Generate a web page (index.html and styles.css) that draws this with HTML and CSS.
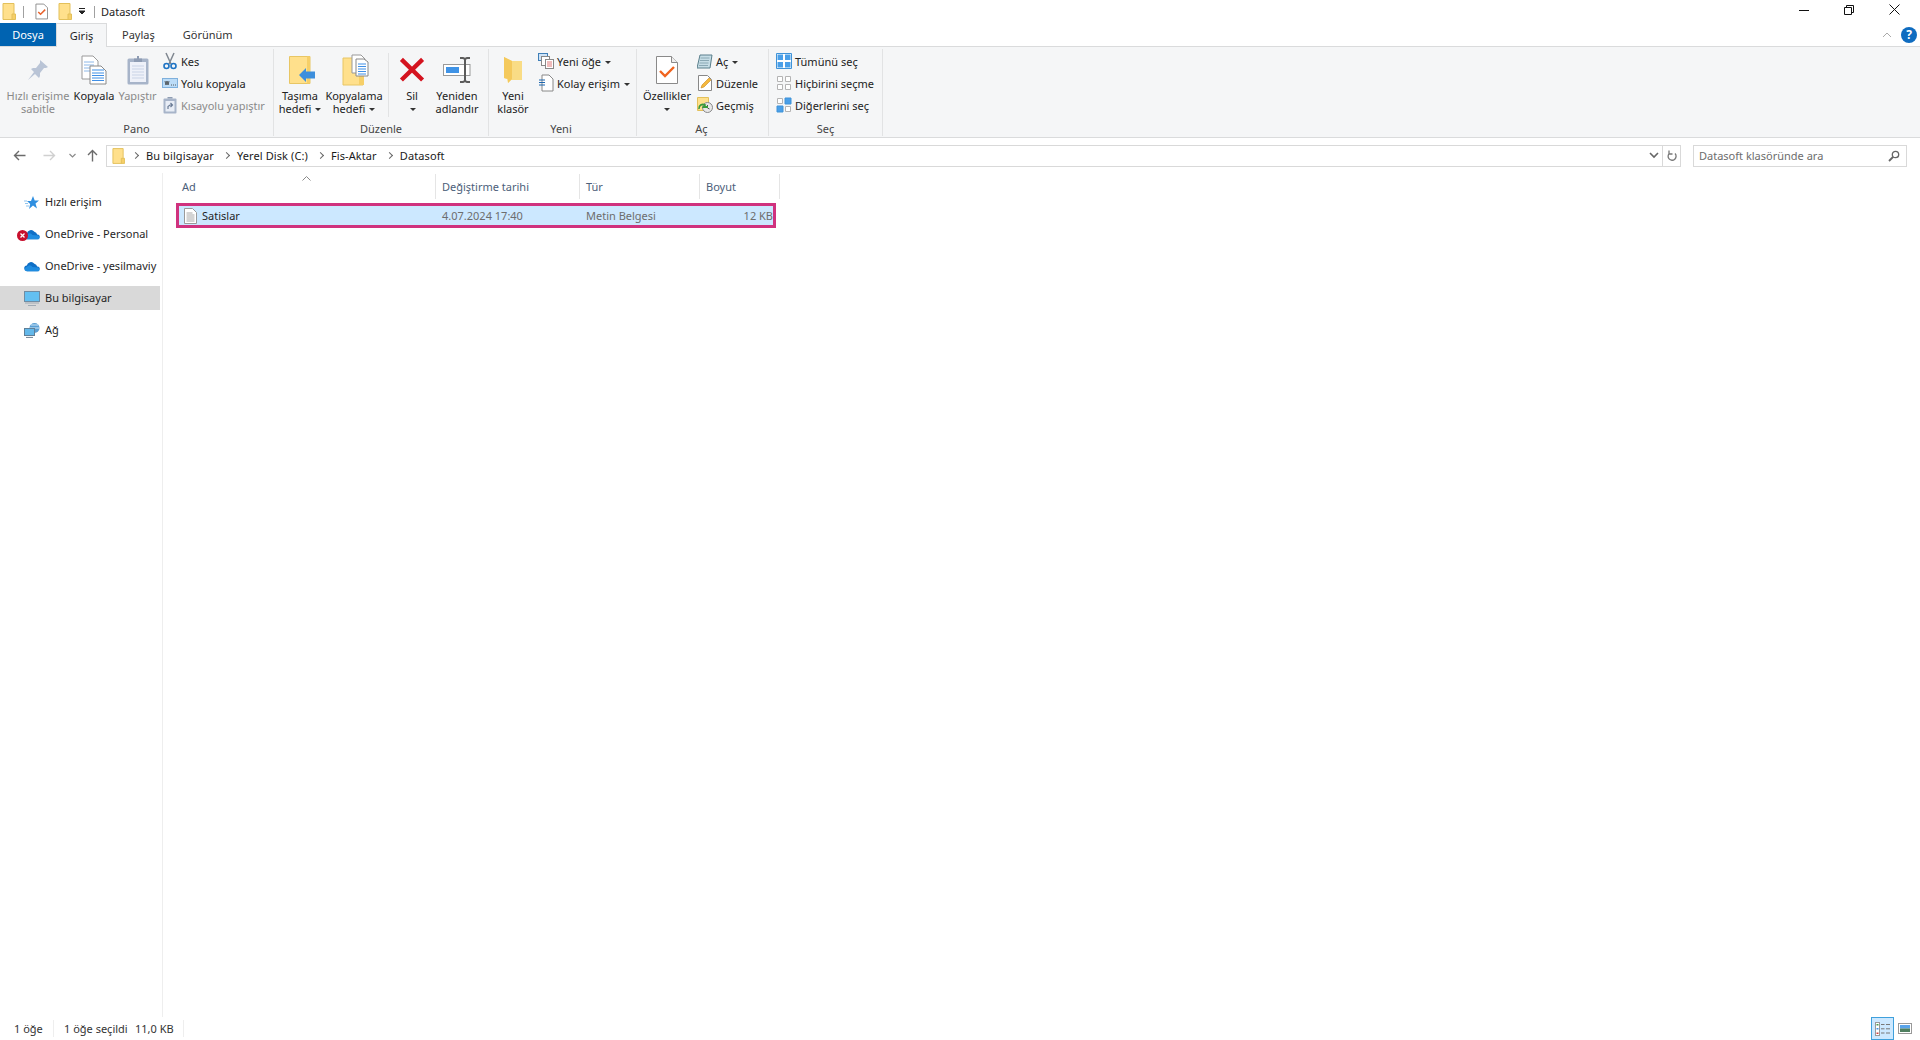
FILE: index.html
```html
<!DOCTYPE html>
<html lang="tr">
<head>
<meta charset="utf-8">
<title>Datasoft</title>
<link rel="stylesheet" href="styles.css">
</head>
<body>
<svg class="defs" width="0" height="0" aria-hidden="true">
  <symbol id="folder" viewBox="0 0 14 17"><path d="M1 .5h11v13l-1.500 .5v2.500H1z" fill="#ffe08c" stroke="#e3c05a"/><path d="M10 11h3.500v5.500H10z" fill="#f6cf68" stroke="#e3c05a"/></symbol>
  <symbol id="props-s" viewBox="0 0 14 17"><path d="M1 .5h8.500l4 4v12H1z" fill="#fff" stroke="#8a8a8a"/><path d="M3.500 9l2.500 2.500 5-5" fill="none" stroke="#e8622c" stroke-width="1.600"/></symbol>
  <symbol id="pin" viewBox="0 0 24 24"><path d="M14 2l8 7-2 1-2 0-4 5 0 3-1 2-4-4-7 6 6-8-3-3 2-1h3l4-5v-2z" fill="#b9c4d6"/></symbol>
  <symbol id="copy" viewBox="0 0 26 30"><path d="M1 1h11l5 5v18H1z" fill="#fff" stroke="#9a9a9a"/><path d="M3 7h10M3 10h10M3 13h6M3 16h6" stroke="#8db8e8"/><path d="M9 11h11l5 5v13H9z" fill="#fff" stroke="#8a8a8a"/><path d="M11 15h12M11 18h12M11 20.500h12M11 23h12M11 25.500h12" stroke="#3f8fe6" stroke-width="1.200"/></symbol>
  <symbol id="paste" viewBox="0 0 22 30"><rect x=".5" y="3.500" width="21" height="26" rx="1.500" fill="#a7b4c9"/><rect x="3" y="7" width="16" height="20" fill="#eef1f9"/><path d="M5 11h12M5 14h12M5 17h12M5 20h12M5 23h12" stroke="#c9d3e6"/><path d="M7 7V3.500h3V1h2v2.500h3V7z" fill="#8e9cb3"/></symbol>
  <symbol id="cut" viewBox="0 0 14 18"><path d="M3 1l5 11M11 1L6 12" stroke="#7f8790" stroke-width="1.500" fill="none"/><circle cx="3.500" cy="14" r="2.500" fill="none" stroke="#1f74c4" stroke-width="1.600"/><circle cx="10.500" cy="14" r="2.500" fill="none" stroke="#1f74c4" stroke-width="1.600"/></symbol>
  <symbol id="path" viewBox="0 0 16 10"><rect x=".5" y=".5" width="15" height="9" fill="#bcdcf7" stroke="#7fb0dc"/><path d="M3 3l1 4 1-4 1 4 1-4M9 7h1M11 7h1M13 7h1" stroke="#3a3a3a" fill="none" stroke-width=".8"/></symbol>
  <symbol id="shortcut" viewBox="0 0 14 18"><rect x=".5" y="2.500" width="13" height="15" rx="1" fill="#a7b4c9"/><rect x="2.500" y="5" width="9" height="10.500" fill="#e8edf6"/><path d="M4.500 2.500V1h5v1.500" fill="#8e9cb3"/><path d="M5 13v-2.500l2-1.500H9M7.500 7l2 2-2 2" stroke="#6b7c96" stroke-width="1.200" fill="none"/></symbol>
  <symbol id="move" viewBox="0 0 26 28"><path d="M.5 .5h20.500v27H.5z" fill="#ffe08c" stroke="#e8c664"/><path d="M18 .5h3v27h-3z" fill="#f6cf68"/><path d="M10 19l7-7v3.500h9v7h-9V26z" fill="#3d8fdc"/></symbol>
  <symbol id="copyto" viewBox="0 0 27 32"><path d="M1 4h20v27H1z" fill="#ffe08c" stroke="#e8c664"/><path d="M17 4h5v27h-5z" fill="#f6cf68"/><path d="M10 1h9l4 4v14H10z" fill="#fff" stroke="#999"/><path d="M14 5h8l4 3v14H14z" fill="#fff" stroke="#888"/><path d="M16 10h8M16 12.500h8M16 15h8M16 17.500h8M16 20h8" stroke="#3f8fe6"/></symbol>
  <symbol id="del" viewBox="0 0 26 26"><path d="M2 2.500L24 24M24 2.500L2 24" stroke="#d4131f" stroke-width="4.500" fill="none"/></symbol>
  <symbol id="rename" viewBox="0 0 28 26"><rect x=".5" y="7.500" width="26.500" height="11" fill="#fff" stroke="#9a9a9a"/><rect x="3" y="10" width="13" height="6" fill="#3f93e6"/><path d="M17 1h3l2 1 2-1h3M22 2v22M17 25h3l2-1 2 1h3" stroke="#5c5c5c" stroke-width="2" fill="none"/></symbol>
  <symbol id="newfolder" viewBox="0 0 20 28"><path d="M1 1l8 4h10v19H8l-3 3-1-4-3-1z" fill="#f9dc85"/><path d="M1 1l8 4v18l-4 4V23l-4-1z" fill="#f4c95c"/></symbol>
  <symbol id="newitem" viewBox="0 0 16 16"><rect x=".5" y=".5" width="9" height="7" fill="#cfe3f6" stroke="#3f7fb8"/><rect x="3.500" y="3.500" width="8" height="9" fill="#fff" stroke="#888"/><rect x="7.500" y="6.500" width="8" height="9" fill="#fff" stroke="#888"/><path d="M9 9h5M9 11h5M9 13h5" stroke="#e07878"/></symbol>
  <symbol id="easy" viewBox="0 0 16 18"><path d="M4 1h7l4 4v12H4z" fill="#fff" stroke="#888"/><path d="M1 6h6M1 8.500h6M1 11h6" stroke="#1f68b0" stroke-width="1.100"/></symbol>
  <symbol id="props" viewBox="0 0 22 28"><path d="M.5 .5h15l6 6v21H.5z" fill="#fff" stroke="#8a8a8a"/><path d="M15.500 .5v6h6" fill="#eee" stroke="#8a8a8a"/><path d="M4 15l5 5 9-9" fill="none" stroke="#f0641e" stroke-width="2.400"/></symbol>
  <symbol id="open" viewBox="0 0 16 16"><path d="M3 2h12l-2 13H0z" fill="#c6dde6" stroke="#5a7f8c"/><path d="M3.500 5h9M3 7.500h9M2.500 10h9M2 12.500h9" stroke="#8aa8b4"/></symbol>
  <symbol id="edit" viewBox="0 0 14 16"><path d="M.5 .5h9l4 4v11H.5z" fill="#fff" stroke="#888"/><path d="M3 13l1-3 7-7 2 2-7 7z" fill="#f5b83c" stroke="#c98a1e" stroke-width=".6"/></symbol>
  <symbol id="history" viewBox="0 0 16 16"><path d="M.5 .5h11v13H.5z" fill="#ffe08c" stroke="#e3c05a"/><circle cx="10.500" cy="10.500" r="5" fill="#e8e8e8" stroke="#888"/><path d="M10.500 8v3l2 1" stroke="#555" fill="none"/><path d="M2 12a4 4 0 0 1 6-4l-1.500 2H11" stroke="#3a9a3a" stroke-width="1.800" fill="none"/></symbol>
  <symbol id="selall" viewBox="0 0 16 16"><path d="M.5 .5h15v15H.5z" fill="#fff" stroke="#3f93d8"/><path d="M1.500 1.500h5.500v5.500H1.500zM9 1.500h5.500v5.500H9zM1.500 9h5.500v5.500H1.500zM9 9h5.500v5.500H9z" fill="#4a9fe8"/></symbol>
  <symbol id="selnone" viewBox="0 0 16 16"><path d="M1.500 1.500h5v5h-5zM9.500 1.500h5v5h-5zM1.500 9.500h5v5h-5zM9.500 9.500h5v5h-5z" fill="#fff" stroke="#b4b4b4"/></symbol>
  <symbol id="selinv" viewBox="0 0 16 16"><path d="M1.500 1.500h5v5h-5zM9.500 9.500h5v5h-5z" fill="#fff" stroke="#b4b4b4"/><path d="M9 1h6v6H9zM1 9h6v6H1z" fill="#4a9fe8" stroke="#3f93d8"/></symbol>
  <symbol id="cloud" viewBox="0 0 17 11"><path d="M3.500 10.500a3 3 0 0 1-.5-6 4.500 4.500 0 0 1 8-2 4 4 0 0 1 3 3 2.500 2.500 0 0 1 .5 5z" fill="#0f6fc6"/><path d="M1 9.500a2.500 2.500 0 0 1 2-3.500 3.500 3.500 0 0 1 6 0l6 .5a2.500 2.500 0 0 1 1.500 2l-.5 2H3z" fill="#1f8ce0"/></symbol>
</svg>

<header class="titlebar">
  <svg class="qa-folder" width="14" height="17"><use href="#folder"/></svg>
  <span class="qa-sep"></span>
  <svg class="qa-props" width="13" height="17"><use href="#props-s"/></svg>
  <svg class="qa-folder2" width="14" height="17"><use href="#folder"/></svg>
  <svg class="qa-drop" width="8" height="7" viewBox="0 0 8 7"><path d="M1 .5h6M1 3l3 3 3-3z" stroke="#222" fill="#222"/></svg>
  <span class="qa-sep qa-sep2"></span>
  <span class="title">Datasoft</span>
  <div class="winctl">
    <svg width="10" height="10" viewBox="0 0 10 10"><path d="M0 5.500h10" stroke="#111"/></svg>
    <svg width="10" height="10" viewBox="0 0 10 10"><path d="M.5 2.500h7v7h-7zM2.500 2.500V.5h7v7h-2" fill="none" stroke="#111"/></svg>
    <svg width="11" height="11" viewBox="0 0 11 11"><path d="M.5 .5l10 10M10.500 .5l-10 10" stroke="#111"/></svg>
  </div>
</header>

<nav class="tabs">
  <span class="tab tab-file">Dosya</span>
  <span class="tab tab-active">Giriş</span>
  <span class="tab tab-share">Paylaş</span>
  <span class="tab tab-view">Görünüm</span>
  <svg class="collapse" width="10" height="6" viewBox="0 0 10 6"><path d="M1 5l4-4 4 4" fill="none" stroke="#aaa"/></svg>
  <span class="help">?</span>
</nav>

<section class="ribbon">
  <div class="group g-pano">
    <div class="items">
      <div class="big w-pin dim"><span class="ico"><svg width="24" height="24"><use href="#pin"/></svg></span><span class="lbl">Hızlı erişime<br>sabitle</span></div>
      <div class="big w-copy"><span class="ico"><svg width="26" height="30"><use href="#copy"/></svg></span><span class="lbl">Kopyala</span></div>
      <div class="big w-paste dim"><span class="ico"><svg width="22" height="30"><use href="#paste"/></svg></span><span class="lbl">Yapıştır</span></div>
      <div class="col col-pano">
        <div class="small"><svg width="14" height="18"><use href="#cut"/></svg><span>Kes</span></div>
        <div class="small small-path"><svg width="16" height="10"><use href="#path"/></svg><span>Yolu kopyala</span></div>
        <div class="small dim"><svg width="14" height="18"><use href="#shortcut"/></svg><span>Kısayolu yapıştır</span></div>
      </div>
    </div>
    <div class="glabel">Pano</div>
  </div>
  <div class="group g-duz">
    <div class="items">
      <div class="big w-move"><span class="ico"><svg class="off-move" width="26" height="28"><use href="#move"/></svg></span><span class="lbl">Taşıma<br>hedefi <i class="caret"></i></span></div>
      <div class="big w-copyto"><span class="ico"><svg class="off-copyto" width="27" height="32"><use href="#copyto"/></svg></span><span class="lbl">Kopyalama<br>hedefi <i class="caret"></i></span></div>
      <span class="vsep"></span>
      <div class="big w-del"><span class="ico"><svg width="26" height="25"><use href="#del"/></svg></span><span class="lbl">Sil<br><i class="caret"></i></span></div>
      <div class="big w-ren"><span class="ico"><svg width="28" height="26"><use href="#rename"/></svg></span><span class="lbl">Yeniden<br>adlandır</span></div>
    </div>
    <div class="glabel">Düzenle</div>
  </div>
  <div class="group g-yeni">
    <div class="items">
      <div class="big w-new"><span class="ico"><svg width="20" height="28"><use href="#newfolder"/></svg></span><span class="lbl">Yeni<br>klasör</span></div>
      <div class="col">
        <div class="small"><svg width="16" height="16"><use href="#newitem"/></svg><span>Yeni öğe <i class="caret"></i></span></div>
        <div class="small"><svg width="16" height="18"><use href="#easy"/></svg><span>Kolay erişim <i class="caret"></i></span></div>
      </div>
    </div>
    <div class="glabel">Yeni</div>
  </div>
  <div class="group g-ac">
    <div class="items">
      <div class="big w-props"><span class="ico"><svg width="22" height="28"><use href="#props"/></svg></span><span class="lbl">Özellikler<br><i class="caret"></i></span></div>
      <div class="col">
        <div class="small"><svg width="16" height="16"><use href="#open"/></svg><span>Aç <i class="caret"></i></span></div>
        <div class="small"><svg width="16" height="16"><use href="#edit"/></svg><span>Düzenle</span></div>
        <div class="small"><svg width="16" height="16"><use href="#history"/></svg><span>Geçmiş</span></div>
      </div>
    </div>
    <div class="glabel">Aç</div>
  </div>
  <div class="group g-sec">
    <div class="items">
      <div class="col">
        <div class="small"><svg width="16" height="16"><use href="#selall"/></svg><span>Tümünü seç</span></div>
        <div class="small"><svg width="16" height="16"><use href="#selnone"/></svg><span>Hiçbirini seçme</span></div>
        <div class="small"><svg width="16" height="16"><use href="#selinv"/></svg><span>Diğerlerini seç</span></div>
      </div>
    </div>
    <div class="glabel">Seç</div>
  </div>
</section>

<section class="addr">
  <div class="navbtns">
    <svg width="13" height="11" viewBox="0 0 13 11"><path d="M12.500 5.500H1.500M6 1L1.500 5.500 6 10" fill="none" stroke="#6b6b6b" stroke-width="1.400"/></svg>
    <svg width="13" height="11" viewBox="0 0 13 11"><path d="M.5 5.500h11M7 1l4.500 4.500L7 10" fill="none" stroke="#d0d0d0" stroke-width="1.400"/></svg>
    <svg width="7" height="5" viewBox="0 0 7 5"><path d="M.5 1l3 3 3-3" fill="none" stroke="#8a8a8a" stroke-width="1.200"/></svg>
    <svg width="11" height="13" viewBox="0 0 11 13"><path d="M5.500 12.500V1.500M1 6l4.500-4.500L10 6" fill="none" stroke="#6b6b6b" stroke-width="1.400"/></svg>
  </div>
  <div class="pathbox">
    <svg class="pfolder" width="13" height="16"><use href="#folder"/></svg>
    <span class="chev"></span><span class="crumb">Bu bilgisayar</span>
    <span class="chev"></span><span class="crumb">Yerel Disk (C:)</span>
    <span class="chev"></span><span class="crumb">Fis-Aktar</span>
    <span class="chev"></span><span class="crumb">Datasoft</span>
    <svg class="pdrop" width="10" height="7" viewBox="0 0 10 7"><path d="M1 1l4 4 4-4" fill="none" stroke="#666" stroke-width="1.600"/></svg>
    <span class="psep"></span>
    <svg class="prefresh" width="10" height="12" viewBox="0 0 10 12"><path d="M2.500 3.200a4 4 0 1 0 5.500 .3M2 .5v3.500h3.500" fill="none" stroke="#777" stroke-width="1.300"/></svg>
  </div>
  <div class="search">
    <span>Datasoft klasöründe ara</span>
    <svg width="12" height="12" viewBox="0 0 12 12"><circle cx="7.500" cy="4.500" r="3.200" fill="none" stroke="#666" stroke-width="1.300"/><path d="M5 7l-4 4" stroke="#666" stroke-width="1.800"/></svg>
  </div>
</section>

<main class="main">
  <aside class="tree">
    <div class="node"><svg class="nico" width="16" height="15" viewBox="0 0 16 15"><path d="M9 1l1.700 4.500H15l-3.500 3 1.500 5L9 10.500 5 14l1.200-5L3 6h4z" fill="#2f8fe0"/><path d="M0 6h3M1 8.500h3M2 11h3" stroke="#8fc4ee"/></svg><span>Hızlı erişim</span></div>
    <div class="node"><svg class="nico" width="16" height="11"><use href="#cloud"/></svg><span class="badge"><svg width="11" height="11" viewBox="0 0 11 11"><circle cx="5.500" cy="5.500" r="5.500" fill="#c8102e"/><path d="M3.500 3.500l4 4M7.500 3.500l-4 4" stroke="#fff" stroke-width="1.300"/></svg></span><span>OneDrive - Personal</span></div>
    <div class="node"><svg class="nico" width="16" height="11"><use href="#cloud"/></svg><span>OneDrive - yesilmaviy</span></div>
    <div class="node node-sel"><svg class="nico" width="16" height="15" viewBox="0 0 16 15"><rect x=".5" y=".5" width="15" height="10" fill="#63c0f2" stroke="#6f8ca3"/><path d="M1 12h14M4 14.500h8" stroke="#a0aab4" stroke-width="1.200"/></svg><span>Bu bilgisayar</span></div>
    <div class="node"><svg class="nico" width="16" height="15" viewBox="0 0 16 15"><circle cx="10.500" cy="5" r="5" fill="#5a9fd4"/><path d="M7 2h7M6 5h9" stroke="#cfe6f7"/><rect x=".5" y="5.500" width="10" height="7" fill="#63b8ea" stroke="#5f7f98"/><path d="M2 14.500h7" stroke="#7c8c9c" stroke-width="1.200"/></svg><span>Ağ</span></div>
  </aside>
  <div class="list">
    <div class="thead">
      <svg class="sort" width="9" height="5" viewBox="0 0 9 5"><path d="M.5 4.500l4-4 4 4" fill="none" stroke="#8a8a8a"/></svg>
      <span class="th th-name">Ad</span>
      <span class="th th-date">Değiştirme tarihi</span>
      <span class="th th-type">Tür</span>
      <span class="th th-size">Boyut</span>
    </div>
    <div class="row">
      <span class="cell cell-name"><svg width="13" height="16" viewBox="0 0 13 16"><path d="M.5 .5h8l4 4v11H.5z" fill="#fff" stroke="#9a9a9a"/><path d="M2.500 5h6M2.500 7h8M2.500 9h8M2.500 11h8M2.500 13h8" stroke="#a8a8a8"/></svg>Satislar</span>
      <span class="cell cell-date">4.07.2024 17:40</span>
      <span class="cell cell-type">Metin Belgesi</span>
      <span class="cell cell-size">12 KB</span>
    </div>
  </div>
</main>

<footer class="status">
  <span class="st st-count">1 öğe</span>
  <span class="st-div div-1"></span>
  <span class="st st-sel">1 öğe seçildi</span>
  <span class="st st-size">11,0 KB</span>
  <span class="st-div div-2"></span>
  <div class="views">
    <span class="view-on"><svg width="15" height="14" viewBox="0 0 15 14"><rect x=".5" y=".5" width="4" height="13" fill="#fff" stroke="#999"/><path d="M1.500 2h2v1.500h-2z" fill="#4a9a4a"/><path d="M1.500 6h2v1.500h-2z" fill="#3f93e6"/><path d="M1.500 10.500h2V12h-2z" fill="#d04040"/><path d="M6 2.500h3.500M11 2.500h4M6 6.800h3.500M11 6.800h4M6 11h3.500M11 11h4" stroke="#777"/></svg></span>
    <svg width="14" height="11" viewBox="0 0 14 11"><rect x=".5" y=".5" width="13" height="10" fill="#fff" stroke="#999"/><rect x="2" y="2" width="10" height="3.500" fill="#5aa4ea"/><rect x="2" y="5.500" width="10" height="3.500" fill="#4f7f5f"/></svg>
  </div>
</footer>
</body>
</html>
```

FILE: styles.css
```css
* { box-sizing: border-box; }
html, body { margin: 0; height: 100%; }
body {
  display: flex;
  flex-direction: column;
  height: 1040px;
  overflow: hidden;
  background: #fff;
  color: #1f1f1f;
  font: 11px/13px "Noto Sans", "Open Sans", sans-serif;
}
.defs { position: absolute; }
svg { display: block; flex: none; }

/* title bar */
.titlebar { height: 23px; display: flex; align-items: center; flex: none; position: relative; }
.qa-folder { margin-left: 2px; }
.qa-sep { width: 1px; height: 12px; background: #a0a0a0; margin-left: 7px; }
.qa-props { margin-left: 11px; }
.qa-folder2 { margin-left: 10px; }
.qa-drop { margin-left: 6px; }
.qa-sep2 { margin-left: 8px; }
.title { margin-left: 6px; color: #222; }
.winctl { margin-left: auto; display: flex; align-items: center; gap: 35px; padding-right: 20px; margin-top: -4px; }

/* tabs */
.tabs { height: 24px; display: flex; align-items: center; flex: none; position: relative; border-bottom: 1px solid #dadbdc; }
.tab { height: 24px; display: flex; align-items: center; justify-content: center; }
.tab-file { width: 56px; background: #0063b1; color: #fff; height: 23px; margin-top: -1px; }
.tab-active { width: 51px; background: #f5f6f7; border: 1px solid #dadbdc; border-bottom: 0; margin-top: 1px; position: relative; z-index: 1; height: 24px; }
.tab-share { margin-left: 15px; color: #333; }
.tab-view { margin-left: 28px; color: #333; }
.collapse { margin-left: auto; margin-right: 9px; }
.help { width: 16px; height: 16px; border-radius: 50%; background: #0f6cc0; color: #fff; font-weight: 700; font-size: 12px; line-height: 16px; text-align: center; margin-right: 3px; }

/* ribbon */
.ribbon { height: 91px; flex: none; display: flex; background: #f5f6f7; border-bottom: 1px solid #dadbdc; }
.group { display: flex; flex-direction: column; border-right: 1px solid #e2e3e4; height: 87px; margin-top: 2px; }
.g-pano { width: 274px; }
.g-duz { width: 215px; }
.g-yeni { width: 148px; }
.g-ac { width: 132px; }
.g-sec { width: 114px; padding-left: 6px; }
.g-sec .glabel { margin-left: -6px; }
.g-yeni .glabel { margin-right: 3px; }
.g-ac .glabel { margin-right: 2px; }
.items { height: 72px; display: flex; }
.glabel { height: 15px; text-align: center; color: #444; line-height: 15px; }
.big { display: flex; flex-direction: column; align-items: center; text-align: center; white-space: nowrap; flex: none; }
.ico { height: 41px; display: flex; align-items: center; justify-content: center; }
.lbl { display: block; color: #222; margin-top: -1px; }
.dim .lbl, .dim span { color: #8a8a8a; }
.w-pin { width: 66px; margin-left: 5px; }
.w-copy { width: 44px; margin-left: 1px; }
.w-paste { width: 43px; }
.col { display: flex; flex-direction: column; padding-top: 1px; }
.col-pano { margin-left: 4px; }
.small { height: 22px; display: flex; align-items: center; gap: 4px; white-space: nowrap; color: #222; }
.small-path { gap: 3px; margin-left: -1px; }
.g-yeni .small, .g-ac .small, .g-sec .small { padding-left: 1px; gap: 3px; }
.w-move { width: 52px; }
.off-move { margin-left: 3px; }
.w-copyto { width: 56px; }
.off-copyto { margin-left: 3px; }
.vsep { width: 1px; height: 64px; background: #e2e3e4; margin: 4px 5px 0 6px; flex: none; }
.w-del { width: 36px; }
.w-ren { width: 54px; }
.w-new { width: 48px; }
.w-props { width: 58px; margin-left: 1px; }
.caret { display: inline-block; width: 0; height: 0; border: 3px solid transparent; border-top-color: #333; border-bottom: 0; vertical-align: 2px; margin-left: 1px; }

/* address bar */
.addr { height: 35px; flex: none; display: flex; align-items: center; }
.navbtns { width: 106px; display: flex; align-items: center; padding-left: 13px; }
.navbtns svg:nth-child(2) { margin-left: 17px; }
.navbtns svg:nth-child(3) { margin-left: 13px; }
.navbtns svg:nth-child(4) { margin-left: 11px; }
.pathbox { width: 1575px; height: 22px; border: 1px solid #d9d9d9; display: flex; align-items: center; padding-left: 5px; color: #1a1a1a; }
.pfolder { margin-right: 8px; }
.chev { width: 5px; height: 5px; border-top: 1px solid #666; border-right: 1px solid #666; transform: rotate(45deg); margin-right: 8px; flex: none; }
.crumb { margin-right: 10px; letter-spacing: .1px; }
.pdrop { margin-left: auto; }
.psep { width: 1px; height: 20px; background: #d9d9d9; margin: 0 4px 0 3px; }
.prefresh { margin-right: 3px; }
.search { width: 214px; height: 22px; margin-left: 12px; border: 1px solid #d9d9d9; display: flex; align-items: center; justify-content: space-between; padding: 0 6px 0 5px; color: #6d6d6d; }

/* main */
.main { flex: 1; display: flex; min-height: 0; }
.tree { width: 163px; border-right: 1px solid #eee; padding-top: 17px; display: flex; flex-direction: column; gap: 8px; flex: none; }
.node { height: 24px; width: 160px; display: flex; align-items: center; padding-left: 24px; white-space: nowrap; overflow: hidden; position: relative; color: #1f1f1f; }
.node span { margin-top: -1px; }
.node .nico { margin-right: 5px; }
.node-sel { background: #d9d9d9; }
.badge { position: absolute; left: 17px; top: 9px; }
.list { flex: 1; padding-left: 13px; }
.thead { height: 30px; display: flex; align-items: flex-start; position: relative; color: #4c607a; padding-top: 1px; }
.sort { position: absolute; left: 126px; top: 3px; }
.th { height: 25px; display: flex; align-items: center; border-right: 1px solid #e5e5e5; padding-left: 6px; flex: none; }
.th-name { width: 260px; }
.th-date { width: 144px; }
.th-type { width: 120px; }
.th-size { width: 80px; }
.row { width: 600px; height: 25px; border: 3px solid #d0327e; background: #cce8ff; display: flex; align-items: center; }
.cell { flex: none; color: #6d6d6d; white-space: nowrap; }
.cell-name { width: 257px; display: flex; align-items: center; gap: 5px; padding-left: 5px; color: #1f1f1f; }
.cell-date { width: 144px; padding-left: 6px; }
.cell-type { width: 120px; padding-left: 6px; }
.cell-size { width: 73px; text-align: right; }

/* status */
.status { height: 23px; flex: none; display: flex; align-items: center; color: #333; position: relative; }
.st-count { margin-left: 14px; width: 39px; }
.st-div { width: 1px; height: 17px; background: #eee; }
.st-sel { margin-left: 10px; width: 71px; }
.st-size { width: 48px; }
.views { margin-left: auto; display: flex; align-items: center; gap: 4px; padding-right: 8px; }
.view-on { width: 23px; height: 23px; background: #cce8ff; border: 1px solid #3fa0dc; display: flex; align-items: center; justify-content: center; }
```
